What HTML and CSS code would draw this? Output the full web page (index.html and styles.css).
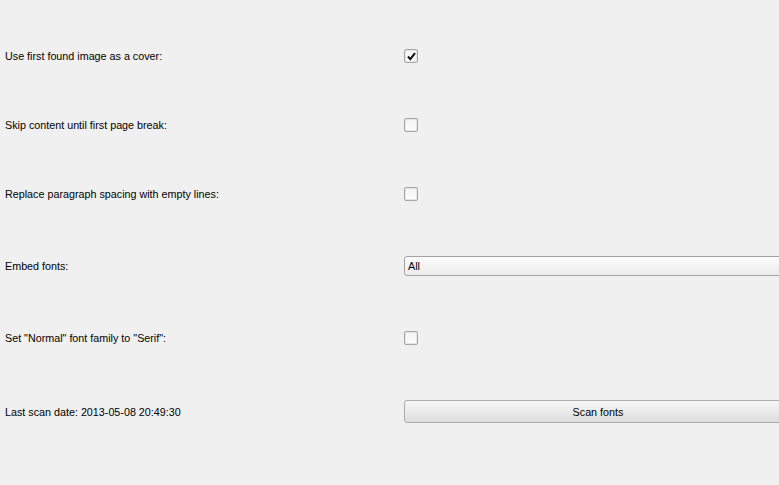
FILE: index.html
```html
<!DOCTYPE html>
<html lang="en">
<head>
    <meta charset="UTF-8">
    <meta name="viewport" content="width=device-width, initial-scale=1">
    <title>Conversion options</title>
    <link rel="stylesheet" href="styles.css">
</head>
<body>
    <div class="form">
        <label class="label">Use first found image as a cover:</label>
        <div class="field">
            <span class="check checked">
                <svg width="11" height="11" viewBox="0 0 11 11"><path d="M2 5.5 L4.3 8.2 L9 2.2" fill="none" stroke="#111" stroke-width="2"/></svg>
            </span>
        </div>

        <label class="label">Skip content until first page break:</label>
        <div class="field"><span class="check"></span></div>

        <label class="label">Replace paragraph spacing with empty lines:</label>
        <div class="field"><span class="check"></span></div>

        <label class="label">Embed fonts:</label>
        <div class="field"><div class="combo">All</div></div>

        <label class="label">Set "Normal" font family to "Serif":</label>
        <div class="field"><span class="check"></span></div>

        <label class="label">Last scan date: 2013-05-08 20:49:30</label>
        <div class="field"><button class="btn">Scan fonts</button></div>
    </div>
</body>
</html>
```
FILE: styles.css
```css
html, body {
    margin: 0;
    overflow: hidden;
}
body {
    font-family: "Liberation Sans", Arial, sans-serif;
    font-size: 10.75px;
    color: #000;
    background-color: #f0f0f0;
    width: 779px;
    height: 485px;
}
.form {
    display: grid;
    grid-template-columns: 399px 388px;
    row-gap: 55px;
    padding: 49px 0 0 5px;
    align-items: center;
}
.label {
    line-height: 14px;
}
.field {
    display: flex;
    align-items: center;
}
.check {
    display: inline-flex;
    align-items: center;
    justify-content: center;
    box-sizing: border-box;
    width: 14px;
    height: 14px;
    border: 1px solid #a6a6a6;
    border-radius: 2px;
    background: linear-gradient(#f4f4f4, #fcfcfc);
    box-shadow: inset 0 0 0 1px #e6e6e6;
}
.combo {
    box-sizing: border-box;
    width: 388px;
    height: 20px;
    line-height: 18px;
    padding-left: 3px;
    border: 1px solid #a3a3a3;
    border-radius: 3px;
    background: linear-gradient(#fbfbfb, #ececec);
}
.btn {
    box-sizing: border-box;
    width: 388px;
    height: 23px;
    font-family: inherit;
    font-size: 10.75px;
    color: #000;
    border: 1px solid #acacac;
    border-radius: 3px;
    background: linear-gradient(#f6f6f6 0%, #ebebeb 50%, #dddddd 100%);
    padding: 0;
}
```
